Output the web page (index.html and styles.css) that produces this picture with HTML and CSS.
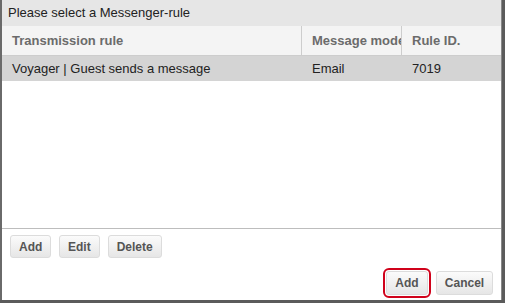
FILE: index.html
```html
<!DOCTYPE html>
<html lang="en">
<head>
    <meta charset="UTF-8">
    <title>Messenger-rule</title>
    <link rel="stylesheet" href="styles.css">
</head>
<body>
    <div class="dialog">
        <div class="dialog-title">Please select a Messenger-rule</div>
        <div class="grid">
            <div class="grid-row grid-head">
                <div class="cell col-rule">Transmission rule</div>
                <div class="cell col-mode">Message mode</div>
                <div class="cell col-id">Rule ID.</div>
            </div>
            <div class="grid-row grid-item selected">
                <div class="cell col-rule">Voyager | Guest sends a message</div>
                <div class="cell col-mode">Email</div>
                <div class="cell col-id">7019</div>
            </div>
        </div>
        <div class="toolbar">
            <button class="btn btn-add">Add</button>
            <button class="btn">Edit</button>
            <button class="btn">Delete</button>
        </div>
        <div class="footer">
            <button class="btn btn-lg highlight">Add</button>
            <button class="btn btn-lg btn-cancel">Cancel</button>
        </div>
    </div>
</body>
</html>
```

FILE: styles.css
```css
* {
    margin: 0;
    padding: 0;
    box-sizing: border-box;
}
body {
    font-family: "Liberation Sans", Arial, sans-serif;
    font-size: 13px;
    background: #5b5b5b;
    width: 505px;
    height: 303px;
    overflow: hidden;
}
.dialog {
    width: 502px;
    height: 300px;
    background: #fff;
    border-left: 2px solid #6a6a6a;
    border-right: 1px solid #888;
    display: flex;
    flex-direction: column;
}
.dialog-title {
    height: 26px;
    line-height: 26px;
    padding-left: 6px;
    background: #e6e6e6;
    color: #222;
}
.grid {
    height: 203px;
    border-bottom: 1px solid #bdbdbd;
}
.grid-row {
    display: flex;
}
.grid-head {
    height: 30px;
    background: #f4f4f4;
    border-bottom: 1px solid #cdcdcd;
    color: #6b6b6b;
    font-weight: bold;
}
.grid-head .cell {
    line-height: 29px;
}
.grid-item {
    height: 25px;
    color: #222;
}
.grid-item .cell {
    line-height: 25px;
}
.selected {
    background: #d4d4d4;
}
.cell {
    padding-left: 10px;
    white-space: nowrap;
    overflow: hidden;
}
.col-rule {
    width: 300px;
}
.col-mode {
    width: 100px;
}
.col-id {
    flex: 1;
}
.grid-head .col-rule,
.grid-head .col-mode {
    border-right: 1px solid #cdcdcd;
}
.toolbar {
    display: flex;
    gap: 8px;
    padding: 6px 0 0 8px;
}
.btn {
    font-family: "Liberation Sans", Arial, sans-serif;
    font-size: 12px;
    font-weight: bold;
    color: #555;
    height: 23px;
    padding: 0 8px;
    border: 1px solid #dcdcdc;
    border-radius: 3px;
    background: linear-gradient(#fbfbfb, #e6e6e6);
}
.btn-add {
    width: 41px;
}
.footer {
    display: flex;
    justify-content: flex-end;
    gap: 8px;
    padding: 13px 8px 0 0;
}
.btn-lg {
    height: 24px;
    padding: 0;
}
.highlight {
    width: 42px;
    outline: 2px solid #d0021b;
    outline-offset: 1px;
}
.btn-cancel {
    width: 57px;
}
```
